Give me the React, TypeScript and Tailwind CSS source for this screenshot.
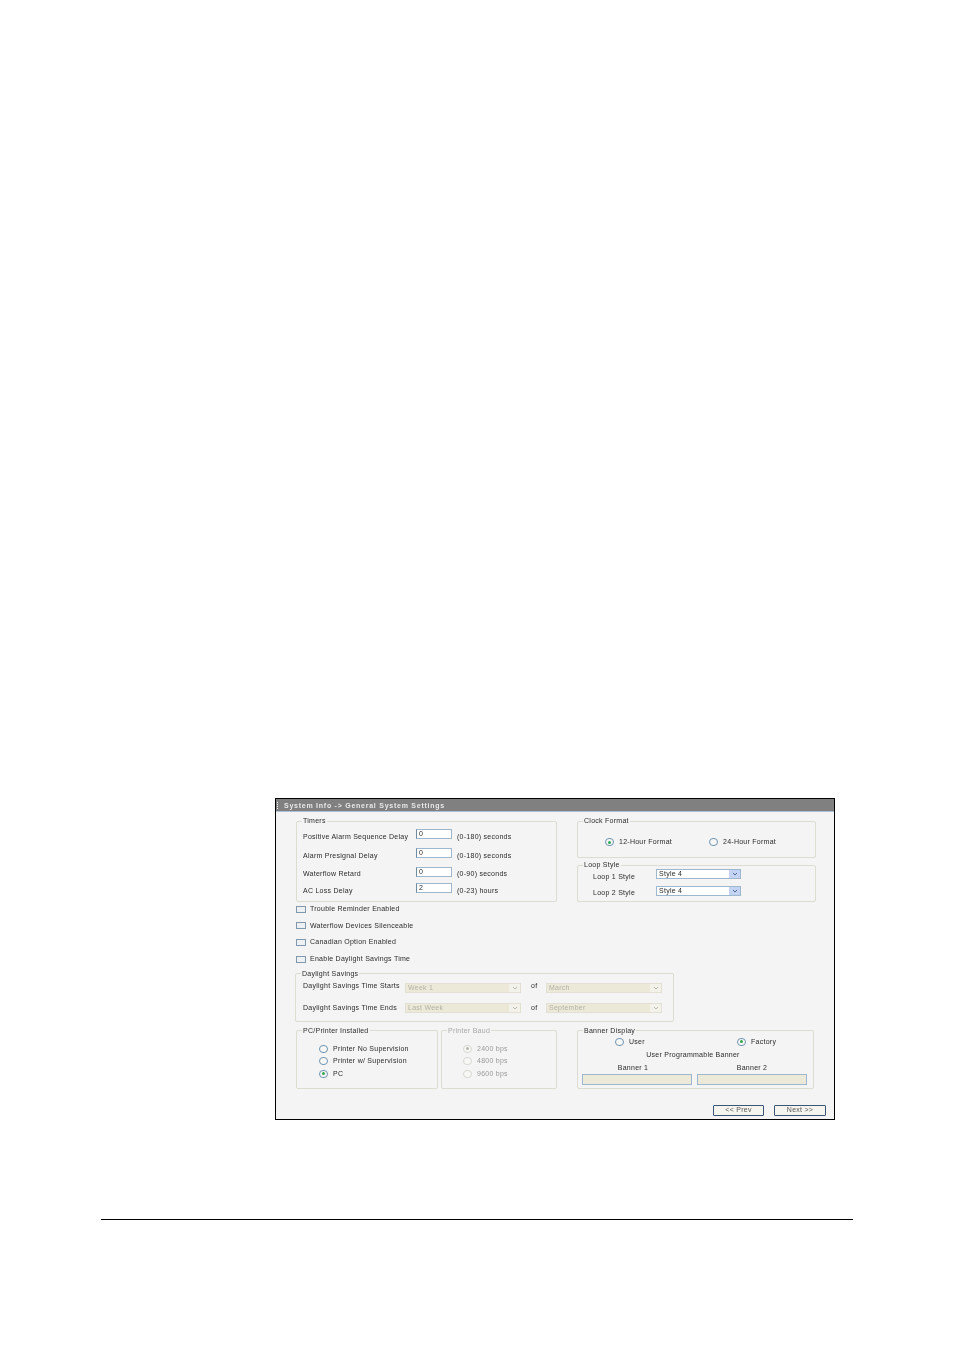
const font = "font-['Liberation_Sans',Arial,sans-serif] text-[7px] leading-[8px] tracking-[0.26px] text-[#2a2a2a] whitespace-nowrap blur-[0.3px]";

function Radio({ on, disabled }: { on?: boolean; disabled?: boolean }) {
  const border = disabled ? "border-[#d8d8d0]" : "border-[#6f94b3]";
  const dot = disabled ? "bg-[#b5b5ad]" : "bg-[#2fa84f]";
  return (
    <span className={`flex h-[8px] w-[9px] shrink-0 items-center justify-center rounded-full border bg-[#f7f7f5] ${border}`}>
      {on ? <span className={`h-[3px] w-[3px] rounded-full ${dot}`} /> : null}
    </span>
  );
}

function Check({ label }: { label: string }) {
  return (
    <div className="flex h-[16.6px] items-center gap-[4px]">
      <span className="h-[7px] w-[10px] border border-[#7f98ad] bg-[#eef1f3]" />
      <span className={font}>{label}</span>
    </div>
  );
}

function Group({ title, disabled, className, children }: { title: string; disabled?: boolean; className: string; children: React.ReactNode }) {
  return (
    <fieldset className={`rounded-[2px] border border-[#dcdcd2] ${className}`}>
      <legend className={`ml-[5px] px-[1px] ${font} ${disabled ? "text-[#a8a8a8]" : ""}`}>{title}</legend>
      {children}
    </fieldset>
  );
}

function Chevron({ color }: { color: string }) {
  return (
    <svg viewBox="0 0 8 6" className="h-[4px] w-[6px]">
      <path d="M1 1.5 L4 4.5 L7 1.5" fill="none" stroke={color} strokeWidth="1.4" />
    </svg>
  );
}

function Select({ value, disabled, width }: { value: string; disabled?: boolean; width: string }) {
  if (disabled) {
    return (
      <div className={`flex h-[10px] items-center justify-between border border-[#e2e0d2] bg-[#ece9d8] pl-[2px] ${width}`}>
        <span className={`${font} text-[#b4b2a6]`}>{value}</span>
        <span className="flex h-full w-[11px] items-center justify-center bg-[#f2f1ea]">
          <Chevron color="#b4b4aa" />
        </span>
      </div>
    );
  }
  return (
    <div className={`flex h-[10px] items-center justify-between border border-[#9db7cf] bg-white pl-[2px] ${width}`}>
      <span className={font}>{value}</span>
      <span className="flex h-full w-[11px] items-center justify-center bg-[#c3d3f3]">
        <Chevron color="#4d6185" />
      </span>
    </div>
  );
}

function TimerRow({ label, value, hint, className, textPad }: { label: string; value: string; hint: string; className: string; textPad: string }) {
  return (
    <div className={`flex items-center ${className}`}>
      <span className={`w-[113px] ${textPad} ${font}`}>{label}</span>
      <span className={`h-[10px] w-[36px] border border-[#9db7cf] border-l-[#6f8ba3] bg-white pl-[2px] ${font}`}>{value}</span>
      <span className={`ml-[5px] ${textPad} ${font}`}>{hint}</span>
    </div>
  );
}

function RadioRow({ label, on, disabled, className }: { label: string; on?: boolean; disabled?: boolean; className?: string }) {
  return (
    <div className={`flex items-center gap-[5px] ${className ?? ""}`}>
      <Radio on={on} disabled={disabled} />
      <span className={`${font} ${disabled ? "text-[#9a9a9a]" : ""}`}>{label}</span>
    </div>
  );
}

function Btn({ label, className }: { label: string; className: string }) {
  return (
    <span className={`flex h-[11px] items-center justify-center rounded-[1px] border border-[#3a5578] bg-[#f5f5f0] ${className}`}>
      <span className={`${font} text-[#555555]`}>{label}</span>
    </span>
  );
}

export default function App() {
  return (
    <div className="h-[1350px] w-[954px] bg-white pl-[275px] pt-[798px]">
      <div className="h-[322px] w-[560px] border border-black bg-[#f4f4f4]">
        <div className="flex h-[13px] items-center gap-[5px] border-b border-[#a9bfd6] bg-[#808080] pl-[1px]">
          <span className="h-[7px] w-[2px] border-l border-dotted border-white" />
          <span className="pt-[2px] font-['Liberation_Sans',Arial,sans-serif] text-[7px] font-bold leading-[8px] tracking-[0.75px] text-[#e8e8e8] blur-[0.3px]">System Info -&gt; General System Settings</span>
        </div>

        <div className="pl-[20px] pt-[5px]">
          <div className="flex gap-[20px]">
            <Group title="Timers" className="h-[85px] w-[261px]">
              <div className="pl-[6px] pt-[4px]">
                <TimerRow label="Positive Alarm Sequence Delay" value="0" hint="(0-180) seconds" className="h-[10px]" textPad="pt-[6px]" />
                <TimerRow label="Alarm Presignal Delay" value="0" hint="(0-180) seconds" className="mt-[9px] h-[10px]" textPad="pt-[6px]" />
                <TimerRow label="Waterflow Retard" value="0" hint="(0-90) seconds" className="mt-[9px] h-[10px]" textPad="pt-[4px]" />
                <TimerRow label="AC Loss Delay" value="2" hint="(0-23) hours" className="mt-[6px] h-[10px]" textPad="pt-[5px]" />
              </div>
            </Group>
            <div className="flex flex-col gap-[3px]">
              <Group title="Clock Format" className="h-[41px] w-[239px]">
                <div className="flex pl-[27px] pt-[13px]">
                  <RadioRow label="12-Hour Format" className="w-[104px]" on />
                  <RadioRow label="24-Hour Format" />
                </div>
              </Group>
              <Group title="Loop Style" className="h-[41px] w-[239px]">
                <div className="pl-[15px]">
                  <div className="flex h-[10px] items-center">
                    <span className={`w-[63px] pt-[6px] ${font}`}>Loop 1 Style</span>
                    <Select value="Style 4" width="w-[85px]" />
                  </div>
                  <div className="mt-[7px] flex h-[10px] items-center">
                    <span className={`w-[63px] pt-[4px] ${font}`}>Loop 2 Style</span>
                    <Select value="Style 4" width="w-[85px]" />
                  </div>
                </div>
              </Group>
            </div>
          </div>

          <div className="-mt-[1px]">
            <Check label="Trouble Reminder Enabled" />
            <Check label="Waterflow Devices Silenceable" />
            <Check label="Canadian Option Enabled" />
            <Check label="Enable Daylight Savings Time" />
          </div>

          <Group title="Daylight Savings" className="-ml-[1px] mt-[2.4px] h-[52px] w-[379px]">
            <div className="pl-[7px] pt-[5px]">
              <div className="flex h-[10px] items-center">
                <span className={`w-[102px] pb-[3px] ${font}`}>Daylight Savings Time Starts</span>
                <Select value="Week 1" disabled width="w-[116px]" />
                <span className={`ml-[10px] w-[15px] pb-[3px] ${font}`}>of</span>
                <Select value="March" disabled width="w-[116px]" />
              </div>
              <div className="mt-[10px] flex h-[10px] items-center">
                <span className={`w-[102px] ${font}`}>Daylight Savings Time Ends</span>
                <Select value="Last Week" disabled width="w-[116px]" />
                <span className={`ml-[10px] w-[15px] ${font}`}>of</span>
                <Select value="September" disabled width="w-[116px]" />
              </div>
            </div>
          </Group>

          <div className="mt-[5px] flex">
            <Group title="PC/Printer Installed" className="h-[62px] w-[142px]">
              <div className="flex flex-col gap-[4.5px] pl-[22px] pt-[10px]">
                <RadioRow label="Printer No Supervision" />
                <RadioRow label="Printer w/ Supervision" />
                <RadioRow label="PC" on />
              </div>
            </Group>
            <Group title="Printer Baud" disabled className="ml-[3px] h-[62px] w-[116px]">
              <div className="flex flex-col gap-[4.5px] pl-[21px] pt-[10px]">
                <RadioRow label="2400 bps" on disabled />
                <RadioRow label="4800 bps" disabled />
                <RadioRow label="9600 bps" disabled />
              </div>
            </Group>
            <Group title="Banner Display" className="ml-[20px] h-[62px] w-[237px]">
              <div className="pt-[3px]">
                <div className="flex pl-[37px]">
                  <RadioRow label="User" className="w-[122px] gap-[4px]" />
                  <RadioRow label="Factory" className="gap-[4px]" on />
                </div>
                <div className={`mt-[5px] pr-[5px] text-center ${font}`}>User Programmable Banner</div>
                <div className="mt-[5px] flex gap-[5px] pl-[4px]">
                  <div className="flex w-[110px] flex-col">
                    <span className={`pr-[8px] text-center ${font}`}>Banner 1</span>
                    <span className="mt-[2px] h-[11px] border border-[#9db7cf] bg-[#ece9d8]" />
                  </div>
                  <div className="flex w-[110px] flex-col">
                    <span className={`text-center ${font}`}>Banner 2</span>
                    <span className="mt-[2px] h-[11px] border border-[#9db7cf] bg-[#ece9d8]" />
                  </div>
                </div>
              </div>
            </Group>
          </div>

          <div className="mt-[16px] flex gap-[10px] pl-[417px]">
            <Btn label="<< Prev" className="w-[51px]" />
            <Btn label="Next >>" className="w-[52px]" />
          </div>
        </div>
      </div>
      <div className="-ml-[174px] mt-[99px] h-[1px] w-[752px] bg-black" />
    </div>
  );
}
